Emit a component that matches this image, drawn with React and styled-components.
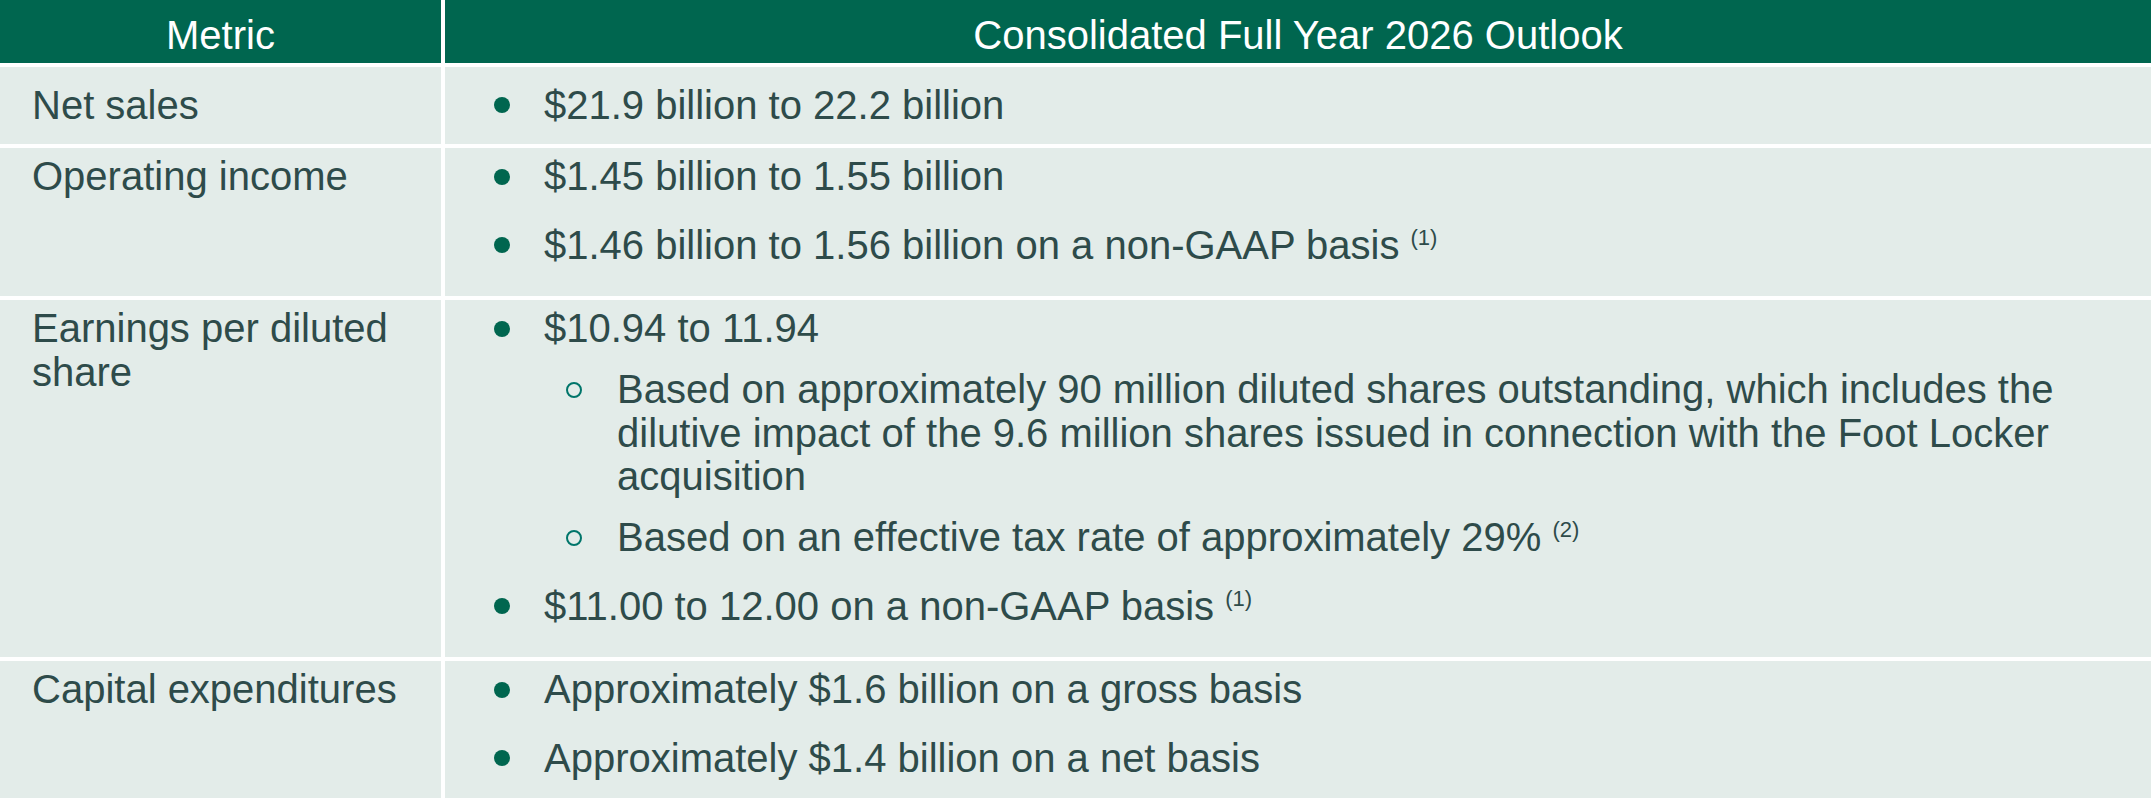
import React from "react";
import styled, { createGlobalStyle } from "styled-components";

const GlobalStyle = createGlobalStyle`
  html, body {
    margin: 0;
    padding: 0;
    background: #ffffff;
    overflow: hidden;
  }
  body {
    font-family: "Liberation Sans", Arial, sans-serif;
  }
`;

const Table = styled.div`
  display: grid;
  grid-template-columns: 441px 1fr;
  column-gap: 4px;
  row-gap: 4px;
  width: 2151px;
  background: #ffffff;
  font-size: 40px;
  line-height: 43.5px;
  color: #2e4b4a;
`;

const HeadCell = styled.div`
  background: #00664f;
  color: #ffffff;
  height: 63px;
  box-sizing: border-box;
  padding-top: 14px;
  text-align: center;
  white-space: nowrap;
`;

const MetricCell = styled.div`
  background: #e3ece9;
  box-sizing: border-box;
  padding: ${(p) => (p.$single ? "0 20px 0 32px" : "7px 20px 0 32px")};
  min-height: ${(p) => (p.$single ? "77px" : "0")};
  display: flex;
  align-items: ${(p) => (p.$single ? "center" : "flex-start")};
`;

const OutlookCell = styled.ul`
  list-style: none;
  margin: 0;
  background: #e3ece9;
  box-sizing: border-box;
  padding: ${(p) => (p.$single ? "0 20px 0 0" : "7px 20px 29px 0")};
  min-height: ${(p) => (p.$single ? "77px" : "0")};
  display: flex;
  flex-direction: column;
  justify-content: ${(p) => (p.$single ? "center" : "flex-start")};
`;

const Item = styled.li`
  display: flex;
  align-items: flex-start;
  padding-left: ${(p) => (p.$sub ? "121px" : "49px")};
  margin-top: ${(p) => (p.$sub ? "17.5px" : "25px")};
  &:first-child {
    margin-top: 0;
  }
`;

const Marker = styled.span`
  flex: none;
  width: 16px;
  height: 16px;
  margin-top: 13.5px;
  margin-right: ${(p) => (p.$sub ? "35px" : "34px")};
  border-radius: 50%;
  box-sizing: border-box;
  background: ${(p) => (p.$sub ? "transparent" : "#00664f")};
  border: ${(p) => (p.$sub ? "2px solid #00756a" : "none")};
`;

const Note = styled.sup`
  font-size: 22px;
  line-height: 0;
  vertical-align: 14px;
`;

const rows = [
  {
    metric: "Net sales",
    single: true,
    items: [{ text: "$21.9 billion to 22.2 billion" }],
  },
  {
    metric: "Operating income",
    items: [
      { text: "$1.45 billion to 1.55 billion" },
      { text: "$1.46 billion to 1.56 billion on a non-GAAP basis", note: "(1)" },
    ],
  },
  {
    metric: "Earnings per diluted share",
    items: [
      { text: "$10.94 to 11.94" },
      {
        sub: true,
        text: "Based on approximately 90 million diluted shares outstanding, which includes the dilutive impact of the 9.6 million shares issued in connection with the Foot Locker acquisition",
      },
      { sub: true, text: "Based on an effective tax rate of approximately 29%", note: "(2)" },
      { text: "$11.00 to 12.00 on a non-GAAP basis", note: "(1)" },
    ],
  },
  {
    metric: "Capital expenditures",
    items: [
      { text: "Approximately $1.6 billion on a gross basis" },
      { text: "Approximately $1.4 billion on a net basis" },
    ],
  },
];

export default function App() {
  return (
    <>
      <GlobalStyle />
      <Table>
        <HeadCell>Metric</HeadCell>
        <HeadCell>Consolidated Full Year 2026 Outlook</HeadCell>
        {rows.map((row) => (
          <React.Fragment key={row.metric}>
            <MetricCell $single={row.single}>{row.metric}</MetricCell>
            <OutlookCell $single={row.single}>
              {row.items.map((item, i) => (
                <Item key={i} $sub={item.sub}>
                  <Marker $sub={item.sub} />
                  <span>
                    {item.text}
                    {item.note && (
                      <>
                        {" "}
                        <Note>{item.note}</Note>
                      </>
                    )}
                  </span>
                </Item>
              ))}
            </OutlookCell>
          </React.Fragment>
        ))}
      </Table>
    </>
  );
}
